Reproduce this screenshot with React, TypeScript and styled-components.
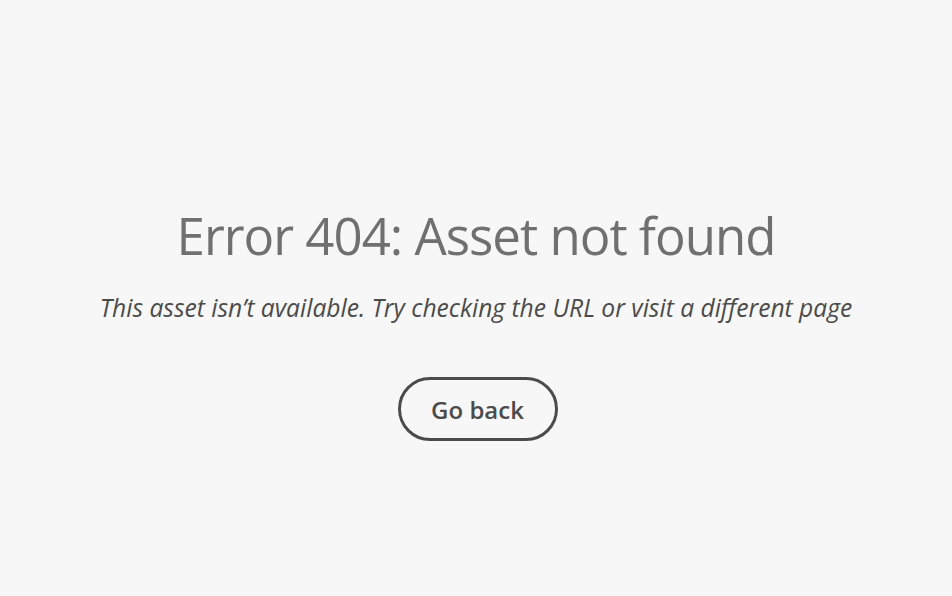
import styled, { createGlobalStyle } from "styled-components";

const GlobalStyle = createGlobalStyle`
  html, body {
    margin: 0;
    padding: 0;
    background: #f7f7f7;
  }
  body {
    font-family: "Open Sans", "Noto Sans", sans-serif;
  }
`;

const Page = styled.main`
  width: 100vw;
  height: 100vh;
  display: flex;
  flex-direction: column;
  align-items: center;
  padding-top: 203px;
  box-sizing: border-box;
  background: #f7f7f7;
`;

const Title = styled.h1`
  margin: 0;
  font-size: 51px;
  line-height: 64px;
  font-weight: 400;
  color: #707070;
  letter-spacing: -1px;
`;

const Subtitle = styled.p`
  margin: 25px 0 0;
  font-size: 24.6px;
  line-height: 32px;
  font-style: italic;
  color: #4b4b4b;
`;

const BackButton = styled.button`
  margin: 53px 0 0 3px;
  width: 160px;
  height: 64px;
  border: 3px solid #4b4b4b;
  border-radius: 32px;
  background: transparent;
  color: #4b4b4b;
  font-family: inherit;
  font-size: 24px;
  font-weight: 600;
  cursor: pointer;
  box-sizing: border-box;
`;

export default function App() {
  return (
    <>
      <GlobalStyle />
      <Page>
        <Title>Error 404: Asset not found</Title>
        <Subtitle>This asset isn’t available. Try checking the URL or visit a different page</Subtitle>
        <BackButton>Go back</BackButton>
      </Page>
    </>
  );
}
